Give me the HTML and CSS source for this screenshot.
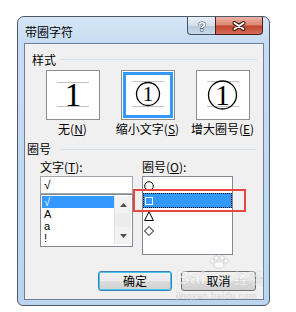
FILE: index.html
```html
<!DOCTYPE html>
<html>
<head>
  <meta charset="utf-8">
  <title>带圈字符</title>
  <link rel="stylesheet" href="styles.css">
</head>
<body>
<div class="dialog">
  <div class="titlebar">
    <span class="title">带圈字符</span>
    <div class="caps">
      <div class="cap help">
        <svg width="12" height="14"><text x="6" y="12" text-anchor="middle" class="qmark">?</text></svg>
      </div>
      <div class="cap close">
        <svg width="16" height="10"><path d="M3.5 2L12.5 8M12.5 2L3.5 8" stroke="#3b1a14" stroke-width="4" stroke-linecap="round"/><path d="M3.5 2L12.5 8M12.5 2L3.5 8" stroke="#fff" stroke-width="2" stroke-linecap="round"/></svg>
      </div>
    </div>
  </div>

  <div class="client">
    <div class="group g-style"><span>样式</span><i class="rule"></i></div>
    <div class="styles">
      <div class="opt">
        <div class="box">
          <svg width="52" height="48"><path d="M10 11.5H42M10 35.5H42" stroke="#c3c3c3"/><text x="26" y="35" text-anchor="middle" class="digit" font-size="33">1</text></svg>
        </div>
        <div class="opt-label">无(<u>N</u>)</div>
      </div>
      <div class="opt">
        <div class="box selected">
          <svg width="52" height="48"><path d="M10 10.5H42M10 35.5H42" stroke="#c3c3c3"/><circle cx="26" cy="23" r="11.5" fill="none" stroke="#000" stroke-width="1.3"/><text x="26" y="30" text-anchor="middle" class="digit" font-size="21">1</text></svg>
        </div>
        <div class="opt-label">缩小文字(<u>S</u>)</div>
      </div>
      <div class="opt">
        <div class="box">
          <svg width="52" height="48"><path d="M10 10.5H42M10 35.5H42" stroke="#c3c3c3"/><circle cx="25.5" cy="24" r="14" fill="none" stroke="#000" stroke-width="1.3"/><text x="25.5" y="34" text-anchor="middle" class="digit" font-size="29">1</text></svg>
        </div>
        <div class="opt-label">增大圈号(<u>E</u>)</div>
      </div>
    </div>

    <div class="group g-ring"><span>圈号</span><i class="rule"></i></div>
    <div class="pickers">
      <div class="col col-text">
        <div class="lbl">文字(<u>T</u>):</div>
        <div class="input">√</div>
        <div class="listbox">
          <div class="items">
            <div class="item sel">√</div>
            <div class="item">A</div>
            <div class="item">a</div>
            <div class="item">!</div>
          </div>
          <div class="scroll">
            <div class="arrow"><svg width="7" height="4"><path d="M3.5 0L7 4H0Z" fill="#4f4f4f"/></svg></div>
            <div class="track"></div>
            <div class="arrow"><svg width="7" height="4"><path d="M0 0H7L3.5 4Z" fill="#4f4f4f"/></svg></div>
          </div>
        </div>
      </div>
      <div class="col col-ring">
        <div class="lbl">圈号(<u>O</u>):</div>
        <div class="list2">
          <div class="row"><svg width="10" height="10"><circle cx="5" cy="5" r="4.3" fill="none" stroke="#000"/></svg></div>
          <div class="row sel"><svg width="10" height="10"><rect x="1.5" y="1.5" width="7" height="7" fill="none" stroke="#fff"/></svg></div>
          <div class="row"><svg width="10" height="10"><path d="M5 0.8L9.4 9.5H0.6Z" fill="none" stroke="#000"/></svg></div>
          <div class="row"><svg width="10" height="10"><path d="M5 0.5L9.5 5L5 9.5L0.5 5Z" fill="none" stroke="#000"/></svg></div>
        </div>
      </div>
    </div>

    <div class="buttons">
      <div class="btn default">确定</div>
      <div class="btn">取消</div>
    </div>
  </div>
</div>

<div class="mark"></div>
<div class="wm">
  <svg class="paw" width="30" height="14"><g fill="rgba(255,255,255,.7)" stroke="rgba(120,120,120,.25)"><ellipse cx="15" cy="10" rx="5" ry="3.5"/><circle cx="8" cy="6" r="2.3"/><circle cx="12.5" cy="3" r="2.3"/><circle cx="18" cy="3" r="2.3"/><circle cx="22" cy="6" r="2.3"/></g></svg>
  <div class="wm-line"><span class="wm-bai">Bai</span><span class="wm-jy">经验</span></div>
  <div class="wm-url">jingyan.baidu.com</div>
</div>
</body>
</html>
```

FILE: styles.css
```css
body {
  margin: 0;
  background: #fff;
  font-family: "Noto Sans CJK SC", sans-serif;
  font-size: 12px;
  color: #000;
}
u { text-decoration: underline; }

.dialog {
  box-sizing: border-box;
  width: 253px;
  height: 290px;
  margin: 16px 0 0 17px;
  border: 1px solid #4d5966;
  border-radius: 7px 7px 6px 6px;
  background: linear-gradient(to bottom, #d6e6f7 0, #c6dcf2 26px, #bcd5ef 100%);
  display: flex;
  flex-direction: column;
}

/* title bar */
.titlebar {
  height: 26px;
  display: flex;
  padding: 0 6px 0 7px;
}
.title {
  margin-top: 9px;
  line-height: 12px;
}
.caps {
  margin-left: auto;
  display: flex;
  height: 18px;
}
.cap {
  box-sizing: border-box;
  height: 18px;
  border: 1px solid #45556a;
  border-top: none;
  display: flex;
  align-items: center;
  justify-content: center;
}
.help {
  width: 28px;
  border-right: none;
  border-radius: 0 0 0 4px;
  background: linear-gradient(#e9eff6, #d3dfeb 50%, #b8cadd 52%, #c9d8e8);
}
.close {
  width: 48px;
  border-color: #4a2019;
  border-radius: 0 0 4px 0;
  background: linear-gradient(#ebb3a6, #d98573 48%, #c3432f 52%, #d3705a);
}
.qmark {
  font-family: "Liberation Sans", sans-serif;
  font-weight: bold;
  font-size: 13px;
  fill: #fff;
  stroke: #3d4a5b;
  stroke-width: 1.1px;
  paint-order: stroke;
}

/* client area */
.client {
  flex: 1;
  margin: 0 5px 5px 6px;
  border: 1px solid #6c8199;
  background: #f0f0f0;
  display: flex;
  flex-direction: column;
}

.group {
  display: flex;
  align-items: center;
  line-height: 12px;
}
.group .rule {
  flex: 1;
  height: 1px;
  background: #d5dfe5;
}
.g-style { margin: 10px 6px 0 7px; }
.g-style .rule { margin: -2px 0 0 4px; }
.g-ring { margin: 8px 7px 0 2px; }
.g-ring .rule { margin-left: 9px; }

.styles {
  display: grid;
  grid-template-columns: repeat(3, 75px);
  margin: 4px 0 0 10px;
}
.opt {
  display: flex;
  flex-direction: column;
}
.box {
  box-sizing: border-box;
  width: 54px;
  height: 50px;
  margin-left: 11px;
  border: 1px solid #8d8d8d;
  background: #fff;
}
.box svg { display: block; }
.box.selected {
  box-shadow: inset 0 0 0 1px #fff, inset 0 0 0 4px #3399ff;
}
.digit {
  font-family: "Liberation Serif", serif;
}
.opt-label {
  margin-top: 3px;
  line-height: 12px;
  text-align: center;
  white-space: nowrap;
}

/* pickers */
.pickers {
  display: flex;
  gap: 9px;
  margin: 6px 0 0 15px;
}
.col-text { width: 93px; }
.col-ring { width: 91px; }
.lbl {
  line-height: 12px;
  white-space: nowrap;
}
.input {
  box-sizing: border-box;
  height: 18px;
  margin-top: 3px;
  border: 1px solid #a3a7ad;
  background: #fff;
  padding-left: 3px;
  line-height: 16px;
  font-family: "Liberation Sans", sans-serif;
}
.listbox {
  box-sizing: border-box;
  height: 53px;
  border: 1px solid #828790;
  background: #fff;
  padding: 1px;
  display: flex;
}
.items { flex: 1; }
.item {
  height: 12px;
  line-height: 12px;
  padding-left: 2px;
  font-family: "Liberation Sans", sans-serif;
  font-size: 11px;
}
.item.sel {
  background: #3399ff;
  color: #fff;
}
.scroll {
  width: 17px;
  height: 48px;
  background: #ececec;
  border-left: 1px solid #e2e2e2;
  box-sizing: border-box;
  display: flex;
  flex-direction: column;
}
.arrow {
  height: 17px;
  display: flex;
  align-items: center;
  justify-content: center;
  background: #f2f2f2;
}
.track { flex: 1; }

.list2 {
  box-sizing: border-box;
  height: 79px;
  margin-top: 3px;
  border: 1px solid #828790;
  background: #fff;
  padding-top: 1px;
}
.row {
  box-sizing: border-box;
  height: 15px;
  padding-left: 1px;
  display: flex;
  align-items: center;
}
.row svg { display: block; }
.row.sel {
  background: #3399ff;
  border: 1px dotted #000;
  padding-left: 0;
}

/* buttons */
.buttons {
  display: flex;
  justify-content: flex-end;
  gap: 9px;
  margin: 16px 7px 0 0;
}
.btn {
  box-sizing: border-box;
  width: 75px;
  height: 20px;
  border: 1px solid #707070;
  border-radius: 3px;
  background: linear-gradient(#f2f2f2, #ebebeb 50%, #dddddd 51%, #cfcfcf);
  text-align: center;
  line-height: 18px;
}
.btn.default {
  width: 74px;
  border-color: #3c7fb1;
  box-shadow: inset 0 0 0 1px #48c6f0;
}

/* annotation and watermark */
.mark {
  position: absolute;
  left: 133px;
  top: 189px;
  width: 113px;
  height: 23px;
  box-sizing: border-box;
  border: 2px solid #e8463f;
}
.wm {
  position: absolute;
  left: 176px;
  top: 255px;
  width: 92px;
  color: rgba(255, 255, 255, 0.6);
  -webkit-text-stroke: 0.6px rgba(130, 130, 130, 0.25);
}
.paw {
  display: block;
  margin-left: 28px;
}
.wm-line {
  display: flex;
  align-items: baseline;
  line-height: 18px;
}
.wm-bai {
  font-family: "Liberation Sans", sans-serif;
  font-weight: bold;
  font-size: 19px;
}
.wm-jy {
  margin-left: 28px;
  font-size: 15px;
  font-weight: bold;
}
.wm-url {
  margin-top: 4px;
  font-family: "Liberation Sans", sans-serif;
  font-size: 9px;
  line-height: 10px;
  letter-spacing: 0.5px;
}
```
